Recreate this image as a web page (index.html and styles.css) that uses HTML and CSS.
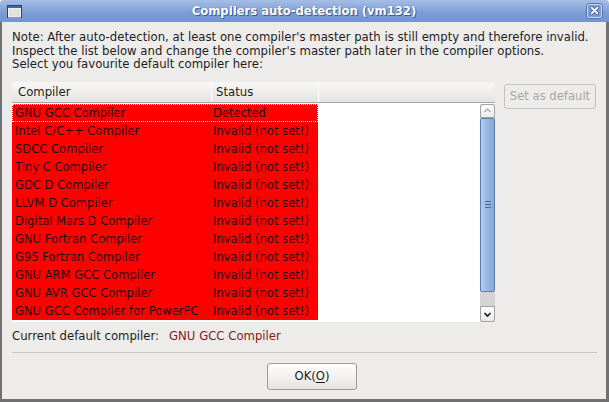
FILE: index.html
```html
<!DOCTYPE html>
<html>
<head>
<meta charset="utf-8">
<title>Compilers auto-detection</title>
<link rel="stylesheet" href="styles.css">
</head>
<body>
<div class="window">
  <div class="titlebar">
    <span class="win-icon"><svg width="15" height="13" viewBox="0 0 15 13"><rect x="0.5" y="0.5" width="14" height="12" fill="#dfe1dc" stroke="#22427e"/><rect x="1" y="1" width="13" height="2" fill="#3e66aa"/><rect x="1.5" y="3.5" width="12" height="8.5" fill="none" stroke="#f2f3ef"/></svg></span>
    <span class="title">Compilers auto-detection (vm132)</span>
    <span class="close"><svg width="17" height="16" viewBox="0 0 17 16"><rect x="0.5" y="0.5" width="16" height="15" rx="3" fill="#7d9dd4" stroke="#5475ae"/><rect x="1.5" y="1.5" width="14" height="13" rx="2" fill="none" stroke="#c9d7ef"/><path d="M5.5 4.5 L11.5 10.5 M11.5 4.5 L5.5 10.5" stroke="#3a5790" stroke-width="3.4" stroke-linecap="round"/><path d="M5.5 4.5 L11.5 10.5 M11.5 4.5 L5.5 10.5" stroke="#ffffff" stroke-width="1.8" stroke-linecap="round"/></svg></span>
  </div>
  <div class="frame">
    <p class="note">Note: After auto-detection, at least one compiler's master path is still empty and therefore invalid.<br>Inspect the list below and change the compiler's master path later in the compiler options.<br>Select you favourite default compiler here:</p>
    <div class="main">
      <div class="list">
        <div class="header">
          <div class="hc hc1">Compiler</div>
          <div class="hc hc2">Status</div>
          <div class="hc hc3"></div>
        </div>
        <div class="body">
          <div class="rows">
            <div class="row focused"><span class="c1">GNU GCC Compiler</span><span class="c2">Detected</span></div>
            <div class="row"><span class="c1">Intel C/C++ Compiler</span><span class="c2">Invalid (not set!)</span></div>
            <div class="row"><span class="c1">SDCC Compiler</span><span class="c2">Invalid (not set!)</span></div>
            <div class="row"><span class="c1">Tiny C Compiler</span><span class="c2">Invalid (not set!)</span></div>
            <div class="row"><span class="c1">GDC D Compiler</span><span class="c2">Invalid (not set!)</span></div>
            <div class="row"><span class="c1">LLVM D Compiler</span><span class="c2">Invalid (not set!)</span></div>
            <div class="row"><span class="c1">Digital Mars D Compiler</span><span class="c2">Invalid (not set!)</span></div>
            <div class="row"><span class="c1">GNU Fortran Compiler</span><span class="c2">Invalid (not set!)</span></div>
            <div class="row"><span class="c1">G95 Fortran Compiler</span><span class="c2">Invalid (not set!)</span></div>
            <div class="row"><span class="c1">GNU ARM GCC Compiler</span><span class="c2">Invalid (not set!)</span></div>
            <div class="row"><span class="c1">GNU AVR GCC Compiler</span><span class="c2">Invalid (not set!)</span></div>
            <div class="row"><span class="c1">GNU GCC Compiler for PowerPC</span><span class="c2">Invalid (not set!)</span></div>
          </div>
          <div class="filler"></div>
          <div class="scrollbar">
            <div class="sb-up"><svg width="13" height="13" viewBox="0 0 13 13"><path d="M3.5 8 L6.5 5 L9.5 8" fill="none" stroke="#a9a9a9" stroke-width="1.2"/></svg></div>
            <div class="sb-thumb"><span class="grip"></span><span class="grip"></span><span class="grip"></span></div>
            <div class="sb-trough"></div>
            <div class="sb-down"><svg width="13" height="14" viewBox="0 0 13 14"><path d="M3.5 6 L6.5 9 L9.5 6" fill="none" stroke="#1a1a1a" stroke-width="1.6"/></svg></div>
          </div>
        </div>
      </div>
      <button class="btn btn-disabled" disabled>Set as default</button>
    </div>
    <div class="current"><span class="cur-label">Current default compiler:</span><span class="cur-value">GNU GCC Compiler</span></div>
    <hr class="sep">
    <div class="actions"><button class="btn btn-ok">OK(<u>O</u>)</button></div>
  </div>
</div>
</body>
</html>
```
FILE: styles.css
```css
html, body {
  margin: 0;
  padding: 0;
}
body {
  width: 609px;
  height: 402px;
  overflow: hidden;
  background: #edeceb;
  font-family: "DejaVu Sans", "Liberation Sans", sans-serif;
  font-size: 11.7px;
  color: #1e1e1e;
}
.window {
  display: flex;
  flex-direction: column;
  height: 402px;
}
.titlebar {
  height: 22px;
  flex: none;
  display: flex;
  align-items: center;
  padding: 0 6px 0 7px;
  background: linear-gradient(#a6bee6, #7b9bd4 60%, #7395d0);
  border-radius: 4px 4px 0 0;
}
.win-icon, .close {
  display: flex;
}
.title {
  flex: 1;
  text-align: center;
  font-weight: bold;
  font-size: 11.6px;
  color: #ffffff;
  text-shadow: 1px 1px 0 #3f5c94, 0 0 1px #4a67a0;
  line-height: 22px;
}
.frame {
  flex: 1;
  display: flex;
  flex-direction: column;
  border: solid #707070;
  border-width: 0 3px 3px 2px;
  padding: 9px 9px 0 10px;
}
.note {
  margin: 0;
  line-height: 13.5px;
  white-space: nowrap;
}
.main {
  display: flex;
  align-items: flex-start;
  margin-top: 10px;
}
.list {
  width: 483px;
  flex: none;
}
.header {
  display: flex;
  height: 20px;
  line-height: 20px;
  border-bottom: 1px solid #a9a7a4;
  background: linear-gradient(#f8f7f6, #efeeec 50%, #e4e3e1);
}
.hc {
  box-sizing: border-box;
}
.hc1 {
  width: 199px;
  padding-left: 6px;
}
.hc2 {
  width: 107px;
  padding-left: 4px;
  border-left: 1px solid #ffffff;
}
.hc3 {
  flex: 1;
  border-left: 1px solid #ffffff;
}
.body {
  display: flex;
  height: 219px;
  box-sizing: border-box;
  padding-top: 1px;
  background: #ffffff;
}
.rows {
  width: 306px;
  flex: none;
}
.row {
  display: flex;
  height: 18px;
  line-height: 18px;
  background: #ff0000;
  color: #2b0000;
  white-space: nowrap;
  font-size: 11.55px;
}
.row.focused {
  outline: 1px dotted #ffffff;
  outline-offset: -1px;
}
.row .c1 {
  width: 199px;
  box-sizing: border-box;
  padding-left: 3px;
}
.row .c2 {
  padding-left: 2px;
}
.filler {
  flex: 1;
}
.scrollbar {
  width: 15px;
  flex: none;
  display: flex;
  flex-direction: column;
  background: #d5d4d2;
}
.sb-up, .sb-down {
  box-sizing: border-box;
  border: 1px solid #a3a3a3;
  background: linear-gradient(#fdfdfd, #ebebea);
  display: flex;
  align-items: center;
  justify-content: center;
}
.sb-up {
  height: 14px;
  border-radius: 3px 3px 0 0;
}
.sb-down {
  height: 16px;
  border-radius: 0 0 3px 3px;
}
.sb-thumb {
  height: 174px;
  box-sizing: border-box;
  border: 1px solid #5b7db2;
  border-radius: 2px;
  background: linear-gradient(to right, #b3cbee, #9ab9e5 45%, #86a7da);
  display: flex;
  flex-direction: column;
  align-items: center;
  justify-content: center;
  gap: 2px;
}
.grip {
  display: block;
  width: 6px;
  height: 1px;
  background: #4a6a9c;
}
.sb-trough {
  height: 14px;
  background: #d5d4d2;
}
.btn {
  font-family: "DejaVu Sans", "Liberation Sans", sans-serif;
  font-size: 11.6px;
  box-sizing: border-box;
  border-radius: 3px;
  padding: 0;
  margin: 0;
}
.btn-disabled {
  width: 92px;
  height: 25px;
  margin-left: 9px;
  margin-top: 2px;
  color: #a8a6a3;
  border: 1px solid #c4c2bf;
  background: #edeceb;
}
.current {
  margin-top: 7px;
  line-height: 14px;
  display: flex;
}
.cur-value {
  margin-left: 10px;
  color: #851a1a;
}
.sep {
  margin: 9px 0 0;
  border: 0;
  height: 0;
  border-top: 1px solid #c9c7c4;
}
.actions {
  margin-top: 10px;
  padding-left: 255px;
}
.btn-ok {
  width: 90px;
  height: 27px;
  color: #1a1a1a;
  border: 1px solid #9c9a97;
  background: linear-gradient(#fdfdfd, #f3f2f1 50%, #e4e3e1);
}
.btn-ok u {
  text-decoration: underline;
  text-underline-offset: 2px;
}
```
